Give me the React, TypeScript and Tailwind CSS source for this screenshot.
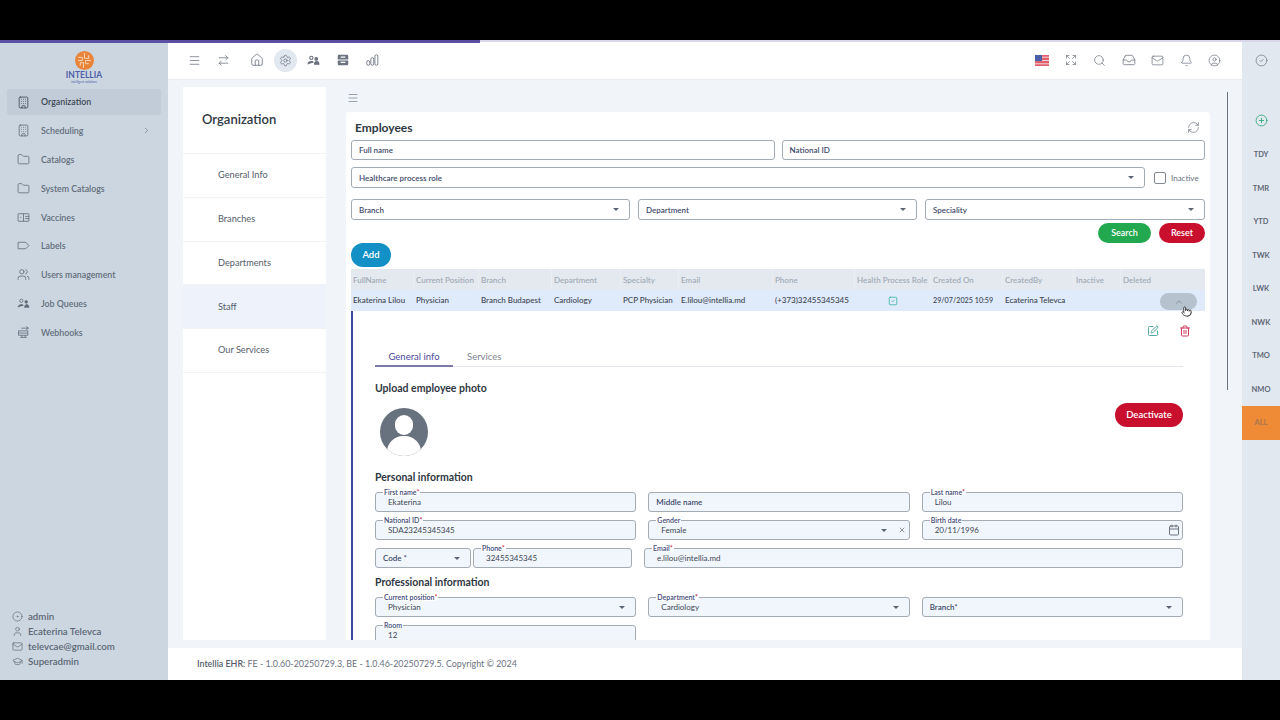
import React from "react";
import {
  Menu, ArrowRightLeft, Home, Settings, Building, Folder, ChevronRight,
  Users, Expand, Search, Inbox, Mail, Bell, CircleUser, CircleCheck, CirclePlus, RefreshCw, SquareCheck, SquarePen, Trash2, X, Calendar, ChevronUp, Pointer, User, GraduationCap, CircleDot,
} from "lucide-react";

function VaccineIcon(p: any) {
  return <svg viewBox="0 0 24 24" fill="none" stroke="currentColor" strokeWidth={2} {...p}><rect x="2" y="5" width="20" height="14" rx="1" /><path d="M12 5v14M15 10h7M15 14h7M6 12h2" /></svg>;
}
function TeamIcon(p: any) {
  return <svg viewBox="0 0 24 24" fill="none" stroke="currentColor" strokeWidth={2} {...p}><circle cx="8" cy="7" r="3" /><circle cx="17" cy="9" r="2.4" fill="currentColor" /><path d="M2 19c0-3 3-5 6-5 2 0 3 .5 4 1.5M14 19c0-3 2-5 4-5s4 2 4 5z" fill="currentColor" /></svg>;
}
function HookIcon(p: any) {
  return <svg viewBox="0 0 24 24" fill="none" stroke="currentColor" strokeWidth={2} {...p}><path d="M8 4h13M17 1l4 3-4 3" /><rect x="3" y="9" width="17" height="8" /><path d="M3 13h17M6 21h12M9 17v4M15 17v4" /></svg>;
}
function LabelIcon(p: any) {
  return <svg viewBox="0 0 24 24" fill="none" stroke="currentColor" strokeWidth={2} strokeLinejoin="round" {...p}><path d="M2 6h14l6 6-6 6H2z" /></svg>;
}
function StorageIcon(p: any) {
  return <svg viewBox="0 0 24 24" fill="currentColor" {...p}><path d="M5 3h14a2 2 0 0 1 2 2v6H3V5a2 2 0 0 1 2-2zM3 13h18v6a2 2 0 0 1-2 2H5a2 2 0 0 1-2-2z" /><path d="M8 6h8v2H8zM8 15h8v2H8z" fill="#fff" /></svg>;
}
function BarsIcon(p: any) {
  return <svg viewBox="0 0 24 24" fill="none" stroke="currentColor" strokeWidth={1.5} {...p}><rect x="3" y="13" width="5" height="8" rx="2.5" /><rect x="10" y="8" width="5" height="13" rx="2.5" /><rect x="17" y="3" width="5" height="18" rx="2.5" /></svg>;
}

const side: [React.ElementType, string, boolean?][] = [
  [Building, "Organization"], [Building, "Scheduling", true], [Folder, "Catalogs"], [Folder, "System Catalogs"],
  [VaccineIcon, "Vaccines"], [LabelIcon, "Labels"], [Users, "Users management"], [TeamIcon, "Job Queues"], [HookIcon, "Webhooks"],
];

function Flag() {
  return (
    <svg width="14" height="11" viewBox="0 0 14 11">
      <rect width="14" height="11" fill="#e0606c" />
      <path d="M0 2.2h14M0 5.5h14M0 8.8h14" stroke="#f3d6da" strokeWidth="1" />
      <rect width="7" height="6" fill="#4a5fa8" />
    </svg>
  );
}

function Caret({ className = "" }: { className?: string }) {
  return <span className={`w-0 h-0 border-l-[3px] border-r-[3px] border-t-[3.5px] border-l-transparent border-r-transparent border-t-[#5b6472] ${className}`} />;
}

function Field({ label, value, caret, tone = "form", className = "", clear, date, star }: { label?: string; value?: string; caret?: boolean; tone?: string; className?: string; clear?: boolean; date?: boolean; star?: boolean }) {
  const legend = value !== undefined || star;
  return (
    <div className={`relative h-[20px] rounded-[3px] border border-[#a3abb5] flex items-center ${tone === "form" ? "bg-[#f1f6fc]" : "bg-white"} ${className}`}>
      {legend && label ? (
        <span className="absolute -top-[5px] left-[7px] px-[1px] text-[7px] leading-[8px] font-semibold text-[#3f4a78] bg-white rounded-sm">
          {label}{star && <span className="text-[#c81e3a]">*</span>}
        </span>
      ) : null}
      {legend ? (
        <span className="pl-[12px] text-[8px] leading-[10px] text-[#3d4653]">{value}</span>
      ) : (
        <span className="pl-[7px] text-[8px] leading-[10px] font-semibold text-[#3f4a6b]">{label}</span>
      )}
      <span className="ml-auto flex items-center gap-[11px] pr-[3px]">
        {caret && <Caret className={clear ? "" : "mr-[7px]"} />}
        {clear && <X size={8} className="text-[#5b6472]" />}
        {date && <Calendar size={12} className="text-[#6b7280] mr-[-1px]" />}
      </span>
    </div>
  );
}

const heads = ["FullName", "Current Position", "Branch", "Department", "Specialty", "Email", "Phone", "Health Process Role", "Created On", "CreatedBy", "Inactive", "Deleted"];
const row = ["Ekaterina Lilou", "Physician", "Branch Budapest", "Cardiology", "PCP Physician", "E.lilou@intellia.md", "(+373)32455345345", "", "29/07/2025 10:59", "Ecaterina Televca", "", ""];

const gridCols = "grid grid-cols-[63px_65px_73px_69px_58px_94px_82px_76px_72px_71px_47px_1fr]";

export default function App() {
  return (
    <div className="relative w-[1280px] h-[720px] bg-black overflow-hidden flex flex-col font-['Lato','Noto_Sans',sans-serif] text-[#3d4653]">
      <div className="h-[40px] shrink-0" />
      <div className="absolute left-0 top-[40px] w-[480px] h-[3px] bg-[#5a4fa2] z-10" />
      <div className="absolute left-[480px] top-[40px] right-0 h-[2px] bg-[#d9d6ea] z-10" />
      <div className="flex h-[640px] shrink-0">
        {/* Sidebar */}
        <aside className="w-[168px] shrink-0 bg-[#cbd6e0] flex flex-col">
          <div className="h-[38px] mt-[11px] flex flex-col items-center">
            <svg width="19" height="19" viewBox="0 0 18 18" className="shrink-0">
              <circle cx="9" cy="9" r="9" fill="#e8853a" />
              <path d="M3 6h4v3H3M9 2v5h4V4M15 9h-5v3h3M8 16v-5H5v3" fill="none" stroke="#fbe3cd" strokeWidth="0.8" />
            </svg>
            <span className="text-[8.5px] leading-[9px] mt-[1px] font-bold text-[#4f60a8]">INTELLIA</span>
            <span className="text-[3px] leading-[4px] text-[#4f60a8]">intelligent solutions</span>
          </div>
          <nav className="px-[7px] flex flex-col">
            {side.map(([I, label, arrow], i) => (
              <div key={label} className={`h-[26px] mb-[2.8px] rounded-[3px] flex items-center pl-[10px] pr-[12px] ${i === 0 ? "bg-[#c1ccd8]" : ""}`}>
                <I width={13} height={13} strokeWidth={1.5} className={i === 0 ? "text-[#3f4854] shrink-0" : "text-[#636d7b] shrink-0"} />
                <span className={`ml-[11px] text-[8.8px] font-semibold ${i === 0 ? "text-[#3f4854]" : "text-[#636d7b]"}`}>{label}</span>
                {arrow && <ChevronRight size={9} className="ml-auto mr-[-2px] text-[#717b88]" />}
              </div>
            ))}
          </nav>
          <div className="mt-auto mb-[11px] pl-[12px] flex flex-col text-[9.7px] font-semibold text-[#5c6675]">
            {([[CircleDot, "admin"], [User, "Ecaterina Televca"], [Mail, "televcae@gmail.com"], [GraduationCap, "Superadmin"]] as [React.ElementType, string][]).map(([I, t]) => (
              <div key={t} className="h-[15px] flex items-center gap-[5px]"><I size={11} strokeWidth={1.4} className="shrink-0" />{t}</div>
            ))}
          </div>
        </aside>

        {/* Center */}
        <div className="w-[1074px] shrink-0 flex flex-col bg-[#f1f5f9]">
          <header className="h-[40px] shrink-0 bg-white flex items-center pt-[1px] pl-[20px] pr-[21px] text-[#6b7280] border-b border-[#eaeef2]">
            <Menu size={13} strokeWidth={1.4} />
            <ArrowRightLeft size={13} strokeWidth={1.4} className="ml-[16px]" />
            <Home size={14} strokeWidth={1.4} className="ml-[20px]" />
            <span className="ml-[10px] w-[23px] h-[23px] rounded-full bg-[#e2e8f0] flex items-center justify-center"><Settings size={13} strokeWidth={1.4} /></span>
            <TeamIcon width={13} height={13} className="ml-[10px]" />
            <StorageIcon width={14} height={14} className="ml-[16px]" />
            <BarsIcon width={14} height={14} className="ml-[15px]" />
            <div className="ml-auto flex items-center gap-[15.5px]">
              <Flag />
              <Expand size={12} strokeWidth={1.4} className="mr-[1px]" />
              <Search size={13} strokeWidth={1.3} />
              <Inbox size={14} strokeWidth={1.3} />
              <Mail size={13} strokeWidth={1.3} />
              <Bell size={13} strokeWidth={1.3} />
              <CircleUser size={13} strokeWidth={1.3} />
            </div>
          </header>

          <main className="flex-1 min-h-0 flex pl-[15px] pt-[7px]">
            <div className="w-[143px] h-[553px] shrink-0 bg-white flex flex-col">
              <div className="h-[67px] shrink-0 pl-[19px] flex items-center text-[13px] font-semibold text-[#2f3742] border-b border-[#f1f3f6]">Organization</div>
              {["General Info", "Branches", "Departments", "Staff", "Our Services"].map((t) => (
                <div key={t} className={`h-[43.75px] shrink-0 pl-[35px] flex items-center text-[9.2px] text-[#555e6b] border-b border-[#f1f3f6] ${t === "Staff" ? "bg-[#edf2fb]" : ""}`}>{t}</div>
              ))}
            </div>

            <div className="ml-[20px] w-[864px] shrink-0 flex flex-col h-[553px]">
              <div className="h-[25px] shrink-0 flex items-center pb-[3px] pl-[1px] text-[#6b7280]"><Menu size={12} strokeWidth={1.3} /></div>
              <section className="flex-1 min-h-0 overflow-hidden bg-white rounded-t-[3px] px-[5px]">
                <div className="h-[28px] flex items-center pt-[3px] pl-[4px] pr-[5px]">
                  <h2 className="text-[12px] font-bold text-[#2f3742]">Employees</h2>
                  <RefreshCw size={13} strokeWidth={1.3} className="ml-auto text-[#6b7280]" />
                </div>
                <div className="flex gap-[7px]">
                  <Field tone="w" label="Full name" className="w-[424px]" />
                  <Field tone="w" label="National ID" className="w-[424px]" />
                </div>
                <div className="mt-[7px] flex items-center">
                  <Field tone="w" label="Healthcare process role" caret className="w-[794px] !h-[21px]" />
                  <span className="ml-[9px] w-[12px] h-[12px] border border-[#7e8791] rounded-[2px]" />
                  <span className="ml-[5px] text-[8px] text-[#6b7280]">Inactive</span>
                </div>
                <div className="mt-[11px] flex gap-[8px]">
                  <Field tone="w" label="Branch" caret className="w-[279px] !h-[21px]" />
                  <Field tone="w" label="Department" caret className="w-[279px] !h-[21px]" />
                  <Field tone="w" label="Speciality" caret className="w-[280px] !h-[21px]" />
                </div>
                <div className="mt-[3px] h-[20px] flex justify-end gap-[8px]">
                  <button className="w-[53px] rounded-full bg-[#22a94f] text-white text-[9px] font-semibold">Search</button>
                  <button className="w-[46px] rounded-full bg-[#c8102e] text-white text-[9px] font-semibold">Reset</button>
                </div>
                <button className="block w-[40px] h-[24px] rounded-full bg-[#1390c6] text-white text-[9.5px] font-semibold">Add</button>

                <div className={`${gridCols} mt-[2px] w-[854px] h-[21px] bg-[#e4e9ef] text-[8px] font-semibold text-[#a2abb7]`}>
                  {heads.map((h) => <div key={h} className="pl-[2px] flex items-center border-r border-[#eaeef2] last:border-0 whitespace-nowrap">{h}</div>)}
                </div>
                <div className={`${gridCols} relative w-[854px] h-[21px] bg-[#dfeafa] text-[8px] leading-[21px] font-medium text-[#3d4653]`}>
                  {row.map((c, i) => (
                    <div key={i} className={`pl-[2px] flex items-center whitespace-nowrap ${i === 8 ? "text-[7.2px] leading-[21px]" : ""}`}>
                      {i === 7 ? <SquareCheck size={10} className="ml-[31px] text-[#3fb8a0]" /> : c}
                    </div>
                  ))}
                  <span className="absolute right-[8px] top-[3px] w-[37px] h-[17px] rounded-full bg-[#b7c2cf] flex items-center justify-center"><ChevronUp size={10} className="text-[#7c8793]" /></span>
                  <Pointer size={11} className="absolute right-[13px] top-[16px] text-[#333] fill-white" />
                </div>

                <div className="w-[854px] border-l-2 border-[#3c4aa0] pl-[22px] pr-[22px]">
                  <div className="h-[39px] flex items-end justify-end gap-[20px] pb-[13px]">
                    <SquarePen size={12} className="text-[#4fa9a0]" />
                    <Trash2 size={12} className="text-[#cf3b5e] mr-[-8px]" />
                  </div>
                  <div className="h-[17px] flex border-b border-[#e5e9ee] text-[9.5px]">
                    <span className="w-[78px] text-center border-b-2 border-[#7d7aa8] text-[#4c4a9c] h-[17px]">General info</span>
                    <span className="ml-[14px] text-[#7b8490]">Services</span>
                  </div>
                  <div className="flex items-start mt-[15px]">
                    <div>
                      <h3 className="text-[10.5px] leading-[13px] font-bold text-[#2f3742]">Upload employee photo</h3>
                      <div className="relative ml-[5px] mt-[13px] w-[48px] h-[48px] rounded-full bg-[#68727f] overflow-hidden">
                        <span className="absolute left-[15px] top-[7px] w-[18px] h-[20px] rounded-full bg-white" />
                        <span className="absolute left-[7px] top-[28px] w-[34px] h-[24px] rounded-t-[16px] bg-white" />
                      </div>
                    </div>
                    <button className="ml-auto mt-[21px] w-[68px] h-[24px] rounded-full bg-[#c8102e] text-white text-[9.5px] font-semibold">Deactivate</button>
                  </div>
                  <h3 className="mt-[15px] text-[10.5px] leading-[13px] font-bold text-[#2f3742]">Personal information</h3>
                  <div className="mt-[8px] grid grid-cols-3 gap-x-[12px] gap-y-[8px]">
                    <Field label="First name" star value="Ekaterina" />
                    <Field label="Middle name" />
                    <Field label="Last name" star value="Lilou" />
                    <Field label="National ID" star value="SDA23245345345" />
                    <Field label="Gender" value="Female" caret clear />
                    <Field label="Birth date" value="20/11/1996" date />
                  </div>
                  <div className="mt-[8px] flex">
                    <Field label="Code *" caret className="w-[96px] shrink-0" />
                    <Field label="Phone" star value="32455345345" className="w-[159px] shrink-0 ml-[2px]" />
                    <Field label="Email" star value="e.lilou@intellia.md" className="flex-1 ml-[12px]" />
                  </div>
                  <h3 className="mt-[8px] text-[10.5px] leading-[13px] font-bold text-[#2f3742]">Professional information</h3>
                  <div className="mt-[8px] grid grid-cols-3 gap-x-[12px] gap-y-[8px]">
                    <Field label="Current position" star value="Physician" caret />
                    <Field label="Department" star value="Cardiology" caret />
                    <Field label="Branch*" caret />
                    <Field label="Room" value="12" />
                  </div>
                </div>
              </section>
            </div>
            <div className="ml-[17px] mt-[5px] w-[1px] h-[298px] bg-[#6b7280]" />
          </main>

          <footer className="h-[32px] shrink-0 bg-white flex items-center pl-[29px] text-[8.9px] text-[#6b7280]">
            <b className="font-semibold text-[#555e6b]">Intellia EHR:</b>&nbsp;FE - 1.0.60-20250729.3, BE - 1.0.46-20250729.5. Copyright © 2024
          </footer>
        </div>

        {/* Right rail */}
        <aside className="w-[38px] shrink-0 bg-[#e2e8f0] flex flex-col items-center text-[7.5px] font-bold text-[#5f6977]">
          <CircleCheck size={13} strokeWidth={1.3} className="mt-[13.5px] text-[#6b7280]" />
          <CirclePlus size={13} strokeWidth={1.6} className="mt-[47.5px] text-[#2fa87a]" />
          <div className="mt-[11px] w-full flex flex-col">
            {["TDY", "TMR", "YTD", "TWK", "LWK", "NWK", "TMO", "NMO", "ALL"].map((t) => (
              <div key={t} className={`h-[33.5px] flex items-center justify-center ${t === "ALL" ? "bg-[#ef8a36] text-[#a9774f]" : ""}`}>{t}</div>
            ))}
          </div>
        </aside>
      </div>
      <div className="h-[40px] shrink-0" />
    </div>
  );
}
